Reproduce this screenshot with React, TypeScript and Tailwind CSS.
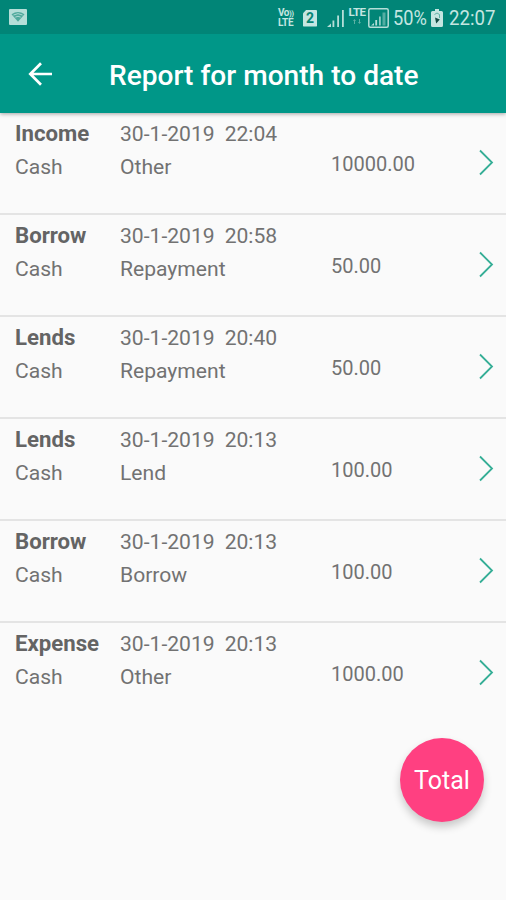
type Entry = { kind: string; account: string; date: string; time: string; category: string; amount: string };

const entries: Entry[] = [
  { kind: "Income", account: "Cash", date: "30-1-2019", time: "22:04", category: "Other", amount: "10000.00" },
  { kind: "Borrow", account: "Cash", date: "30-1-2019", time: "20:58", category: "Repayment", amount: "50.00" },
  { kind: "Lends", account: "Cash", date: "30-1-2019", time: "20:40", category: "Repayment", amount: "50.00" },
  { kind: "Lends", account: "Cash", date: "30-1-2019", time: "20:13", category: "Lend", amount: "100.00" },
  { kind: "Borrow", account: "Cash", date: "30-1-2019", time: "20:13", category: "Borrow", amount: "100.00" },
  { kind: "Expense", account: "Cash", date: "30-1-2019", time: "20:13", category: "Other", amount: "1000.00" },
];

function WifiBadge() {
  return (
    <svg className="h-4 w-[18px]" viewBox="0 0 18 16">
      <rect width="18" height="16" rx="1" fill="#b5ded8" />
      <path d="M2.5 5.2Q9 .8 15.5 5.2L9 12.8Z" fill="#4fa99c" />
      <path d="M4.5 6Q9 3.3 13.5 6M6.3 8.1Q9 6.5 11.7 8.1" fill="none" stroke="#b5ded8" strokeWidth=".9" />
    </svg>
  );
}

function SimBadge() {
  return (
    <span className="flex h-[17px] w-[14px] items-center justify-center rounded-[1px] bg-[#c5e6e1] text-[14px] font-bold text-[#078575] [clip-path:polygon(25%_0,100%_0,100%_100%,0_100%,0_22%)]">
      2
    </span>
  );
}

function SignalBars() {
  return (
    <svg className="h-[18px] w-[18px]" viewBox="0 0 18 18" fill="#b5ded8">
      <path d="M0 18L4 14.5V18Z" />
      <rect x="5.5" y="11.5" width="1.8" height="6.5" />
      <rect x="10.2" y="6.5" width="1.8" height="11.5" />
      <rect x="15" y="1" width="1.8" height="17" />
    </svg>
  );
}

function BoxedSignal() {
  return (
    <svg className="h-5 w-[21px]" viewBox="0 0 21 20">
      <rect x=".8" y=".8" width="19.4" height="18.4" rx="1.5" fill="none" stroke="#b5ded8" strokeWidth="1.5" />
      <g fill="#b5ded8">
        <path d="M3 17.5L6 15V17.5Z" />
        <rect x="7.3" y="12" width="1.8" height="5.5" />
        <rect x="11" y="8.5" width="1.8" height="9" opacity=".8" />
        <rect x="14.5" y="4.5" width="3" height="13" opacity=".45" />
      </g>
    </svg>
  );
}

function Battery() {
  return (
    <svg className="h-[18px] w-3" viewBox="0 0 12 18">
      <path d="M4 0H8V2H10.5Q12 2 12 3.5V16.5Q12 18 10.5 18H1.5Q0 18 0 16.5V3.5Q0 2 1.5 2H4Z" fill="#c5e6e1" />
      <path d="M3.5 5.5L6 4 8.5 5.5V9" fill="none" stroke="#5eb1a5" />
      <path d="M4 8.5L8.8 10.5 5.2 14.5Z" fill="#124b43" />
    </svg>
  );
}

function StatusBar() {
  return (
    <div className="flex h-[34px] items-center bg-[#018577] pl-[9px] text-[#c5e6e1]">
      <WifiBadge />
      <div className="ml-[251px] flex w-[18px] flex-col pt-px text-[10px] leading-[9px] font-bold tracking-[-0.5px]">
        <span className="whitespace-nowrap">Vo<span className="text-[8px]">))</span></span>
        <span className="tracking-[-0.2px]">LTE</span>
      </div>
      <div className="ml-[7px] pt-0.5"><SimBadge /></div>
      <div className="ml-[10px] pt-0.5"><SignalBars /></div>
      <div className="ml-[3px] flex h-5 w-[18px] flex-col items-center text-[11.5px] leading-[11px] font-bold tracking-[-0.5px]">
        <span>LTE</span>
        <svg className="mt-px h-[5px] w-2" viewBox="0 0 8 5" fill="#5eb1a5">
          <path d="M0 2L1.5 0 3 2H2V5H1V2ZM5 3H6V0H7V3H8L6.5 5Z" />
        </svg>
      </div>
      <div className="ml-0.5 pt-px"><BoxedSignal /></div>
      <span className="ml-1 w-[33px] origin-left scale-x-[.89] pt-0.5 text-[20.5px]">50%</span>
      <div className="ml-[5px] pt-px"><Battery /></div>
      <span className="ml-1.5 origin-left scale-x-[.91] pt-0.5 text-[20.5px]">22:07</span>
    </div>
  );
}

function Row({ entry }: { entry: Entry }) {
  return (
    <li className="flex h-[102px] border-b-2 border-[#e4e4e4] pl-[15px] text-[21.1px] leading-[33px] text-[#727272] last:border-transparent">
      <div className="w-[105px] pt-1">
        <p className="text-[22.2px] font-bold text-[#646464]">{entry.kind}</p>
        <p>{entry.account}</p>
      </div>
      <div className="w-[211px] pt-1">
        <p className="flex gap-2.5"><span>{entry.date}</span><span>{entry.time}</span></p>
        <p>{entry.category}</p>
      </div>
      <p className="flex-1 pt-[35px] text-[20px]">{entry.amount}</p>
      <svg className="mt-9 mr-3 h-[27px] w-[15px]" viewBox="0 0 15 27" fill="none" stroke="#35ae96" strokeWidth="1.8">
        <path d="M1 1.5L13 13.5 1 25.5" />
      </svg>
    </li>
  );
}

export default function App() {
  return (
    <div className="relative h-[900px] w-[506px] overflow-hidden bg-[#fafafa] font-[Roboto,sans-serif]">
      <header className="relative h-[113px] bg-[#009788] shadow-[0_1px_4px_rgba(0,0,0,0.35)]">
        <StatusBar />
        <div className="flex h-[79px] items-center pl-7 text-white">
          <svg className="h-6 w-6" viewBox="0 0 24 24" fill="none" stroke="currentColor" strokeWidth="2.7">
            <path d="M24 12H2.5M13 1.3L2.3 12 13 22.7" />
          </svg>
          <h1 className="ml-[57px] pt-1.5 text-[28.1px] font-medium whitespace-nowrap">Report for month to date</h1>
        </div>
      </header>
      <ul>
        {entries.map((entry, i) => <Row key={i} entry={entry} />)}
      </ul>
      <button className="absolute top-[738px] left-[400px] flex h-[84px] w-[84px] items-center justify-center rounded-full bg-[#ff4081] pt-0.5 text-[25px] text-white shadow-[0_5px_8px_rgba(0,0,0,0.2)]">
        Total
      </button>
    </div>
  );
}
